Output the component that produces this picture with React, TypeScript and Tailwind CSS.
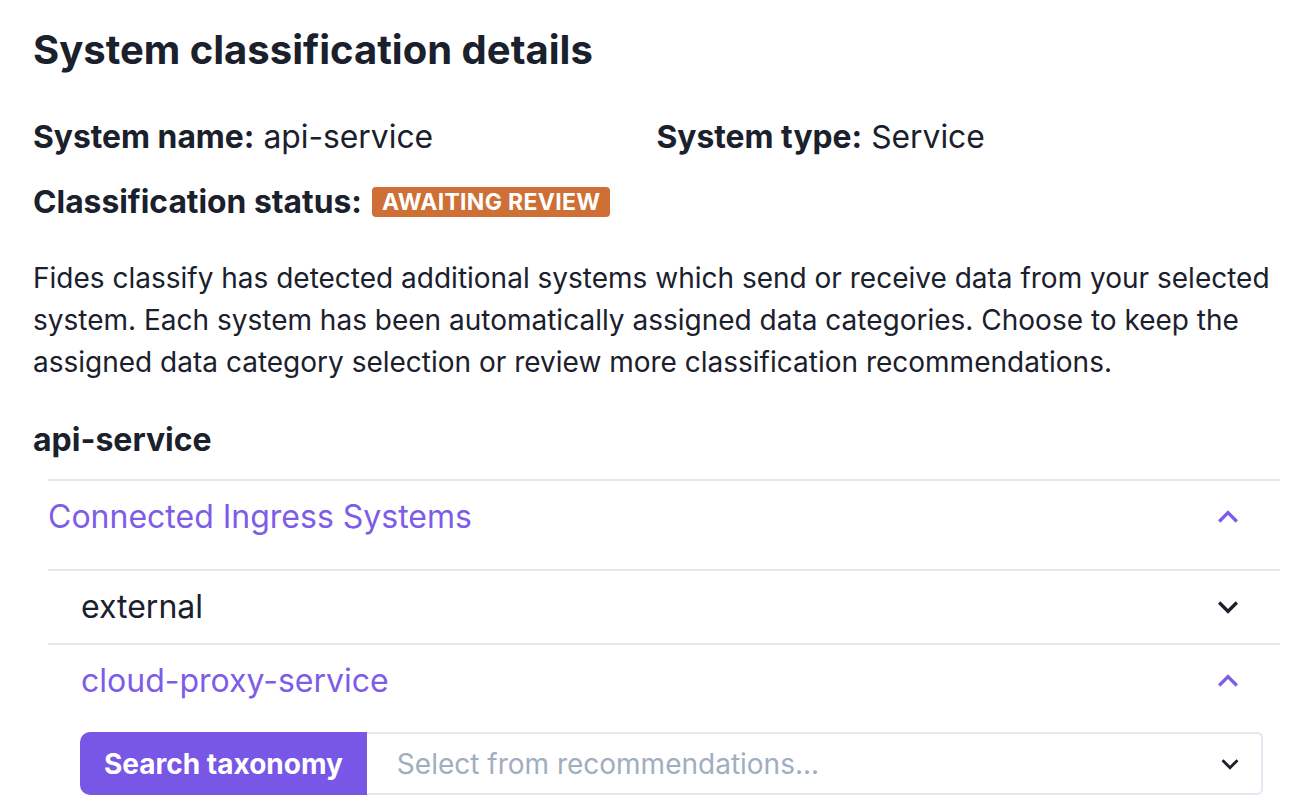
import { ReactNode } from "react";

const ChevronIcon = ({ up, className }: { up?: boolean; className?: string }) => (
    <svg viewBox="0 0 24 24" className={className} fill="currentColor" aria-hidden="true">
        {up ? (
            <path d="M7.41 15.41L12 10.83l4.59 4.58L18 14l-6-6-6 6z" />
        ) : (
            <path d="M16.59 8.59L12 13.17 7.41 8.59 6 10l6 6 6-6z" />
        )}
    </svg>
);

function AccordionRow({
    label,
    open,
    nested,
    children,
}: {
    label: string;
    open?: boolean;
    nested?: boolean;
    children?: ReactNode;
}) {
    return (
        <div className="border-t-2 border-[#E2E8F0]">
            <button
                type="button"
                className={`flex h-[72px] w-full items-center justify-between pr-[32px] text-left text-[32px] ${
                    nested ? "pl-[33px]" : "pl-0"
                } ${open ? "text-[#7D5DE8]" : "text-[#1A202C]"}`}
            >
                <span className="leading-[48px]">{label}</span>
                <ChevronIcon up={open} className={`h-[40px] w-[40px] ${open ? "text-[#7D5DE8]" : "text-[#1A202C]"}`} />
            </button>
            {children}
        </div>
    );
}

export default function App() {
    return (
        <div className="min-h-screen bg-white pl-[33px] pr-[22px] pt-[26px] font-['Inter',sans-serif] text-[#1A202C]">
            <h2 className="text-[40px] font-bold leading-[48px]">System classification details</h2>

            <div className="mt-[42px] grid grid-cols-2 text-[31.8px] leading-[42px]">
                <p>
                    <span className="font-bold">System name:</span> api-service
                </p>
                <p>
                    <span className="font-bold">System type:</span> Service
                </p>
            </div>

            <div className="mt-[23px] flex items-center gap-[10px] text-[31.8px] leading-[42px]">
                <span className="font-bold">Classification status:</span>
                <span className="rounded-[4px] bg-[#CE6F35] px-[10px] text-[23px] font-bold leading-[30px] tracking-[0.3px] text-white">
                    AWAITING REVIEW
                </span>
            </div>

            <p className="mt-[34px] text-[28px] leading-[42px] text-[#1A202C]">
                Fides classify has detected additional systems which send or receive data from your selected
                system. Each system has been automatically assigned data categories. Choose to keep the
                assigned data category selection or review more classification recommendations.
            </p>

            <h3 className="mt-[37px] text-[32px] font-bold leading-[40px]">api-service</h3>

            <div className="ml-[15px] mt-[19px]">
                <AccordionRow label="Connected Ingress Systems" open>
                    <div className="pt-[16px]">
                        <AccordionRow label="external" nested />
                        <AccordionRow label="cloud-proxy-service" open nested>
                            <div className="flex pb-[20px] pl-[32px] pr-[17px] pt-[15px]">
                                <button
                                    type="button"
                                    className="h-[63px] shrink-0 rounded-l-[10px] bg-[#7857E6] px-[24px] text-[28px] font-bold text-white"
                                >
                                    Search taxonomy
                                </button>
                                <div className="flex h-[63px] flex-1 items-center justify-between rounded-r-[6px] border-2 border-l-0 border-[#E2E8F0] pl-[30px] pr-[14px]">
                                    <span className="text-[28px] text-[#A0AEC0]">Select from recommendations...</span>
                                    <ChevronIcon className="h-[34px] w-[34px] text-[#1A202C]" />
                                </div>
                            </div>
                        </AccordionRow>
                    </div>
                </AccordionRow>
            </div>
        </div>
    );
}
